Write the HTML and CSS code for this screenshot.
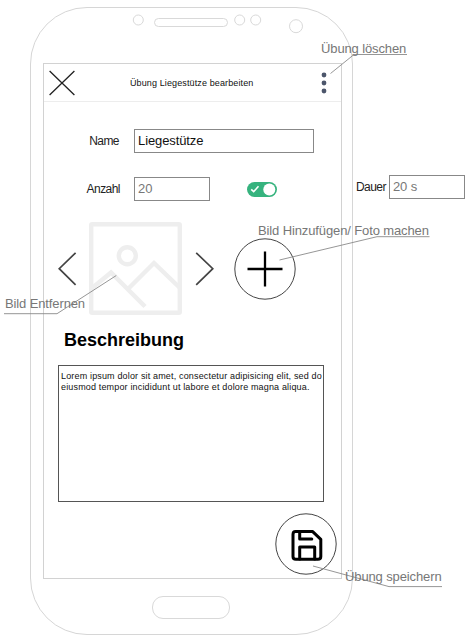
FILE: index.html
```
<!DOCTYPE html>
<html lang="de">
<head>
<meta charset="utf-8">
<title>Übung bearbeiten</title>
<link rel="stylesheet" href="styles.css">
</head>
<body>
<main class="board">
  <section class="phone">
    <div class="sensors">
      <svg width="180" height="30" viewBox="0 0 180 30" fill="none" stroke="#d9d9d9">
        <circle cx="10.3" cy="12" r="5"/>
        <rect x="26.5" y="10.5" width="73" height="8" rx="4"/>
        <circle cx="111.7" cy="12" r="5"/>
        <circle cx="127.7" cy="12" r="5"/>
        <circle cx="168" cy="18.2" r="6.5"/>
      </svg>
    </div>
    <div class="screen">
      <header class="bar">
        <svg class="close" width="26" height="26" viewBox="0 0 26 26" stroke="#222" stroke-width="1.3"><path d="M.6 1L25.4 25M25.4 1L.6 25"/></svg>
        <h1 class="title">Übung Liegestütze bearbeiten</h1>
        <svg class="more" width="6" height="22" viewBox="0 0 6 22" fill="#4c566b"><circle cx="3" cy="3" r="2.4"/><circle cx="3" cy="11" r="2.4"/><circle cx="3" cy="19" r="2.4"/></svg>
      </header>
      <div class="row row-name">
        <span class="label">Name</span>
        <div class="field wide">Liegestütze</div>
      </div>
      <div class="row row-count">
        <span class="label">Anzahl</span>
        <div class="field muted">20</div>
        <svg class="toggle" width="30" height="15" viewBox="0 0 30 15"><rect width="30" height="15" rx="7.5" fill="#36b37e"/><circle cx="22.3" cy="7.5" r="6" fill="#fff"/><path d="M4.2 7.4L6.7 9.7L11.5 4.2" fill="none" stroke="#fff" stroke-width="1.6"/></svg>
      </div>
      <div class="gallery">
        <svg width="19" height="34" viewBox="0 0 19 34" fill="none" stroke="#444" stroke-width="1.7"><path d="M17.6 .8L1.2 16.7L17.6 32.8"/></svg>
        <svg class="picture" width="93" height="93" viewBox="0 0 93 93" fill="none" stroke="#eee" stroke-width="4.4">
          <rect x="2.2" y="2.3" width="88.6" height="88.4" rx="1"/>
          <circle cx="38.3" cy="33.7" r="8.5"/>
          <path d="M2 67L22 50.5L56 84.5M39 67L65 41L91 66"/>
        </svg>
        <svg width="19" height="34" viewBox="0 0 19 34" fill="none" stroke="#444" stroke-width="1.7"><path d="M1.2 .8L17.8 16.7L1.2 32.8"/></svg>
        <svg class="add" width="62" height="62" viewBox="0 0 62 62" fill="none"><circle cx="31" cy="31" r="30.2" stroke="#444"/><path d="M13.5 31H48.5M31 13.5V48.5" stroke="#000" stroke-width="2.3"/></svg>
      </div>
      <h2 class="heading">Beschreibung</h2>
      <div class="description"><div>Lorem ipsum dolor sit amet, consectetur adipisicing elit, sed do</div><div>eiusmod tempor incididunt ut labore et dolore magna aliqua.</div></div>
      <svg class="save" width="62" height="62" viewBox="0 0 62 62" fill="none"><circle cx="31" cy="31" r="30.2" stroke="#444"/><g stroke="#000" stroke-width="3" stroke-linecap="round" stroke-linejoin="round"><path d="M20.6 18.6H37.7L45.8 26.3V43.4Q45.8 46.3 42.9 46.3H20.9Q18 46.3 18 43.4V21.4Q18 18.6 20.6 18.6Z"/><path d="M24.7 19V26H36.8M24.7 46V34H39.7V46"/></g></svg>
    </div>
    <div class="home"></div>
  </section>
  <div class="duration">
    <span class="label">Dauer</span>
    <div class="field muted">20 s</div>
  </div>
  <svg class="leaders" width="472" height="642" viewBox="0 0 472 642" fill="none" stroke="#8a8a8a" stroke-width=".9">
    <path d="M330.5 73.5L354 54.5H407"/>
    <path d="M279.5 260L377 236.7H429.5"/>
    <path d="M116.3 275.5L57 313.7H4"/>
    <path d="M313 566L389 586.6H442"/>
  </svg>
  <span class="note note-delete">Übung löschen</span>
  <span class="note note-add">Bild Hinzufügen/ Foto machen</span>
  <span class="note note-remove">Bild Entfernen</span>
  <span class="note note-save">Übung speichern</span>
</main>
</body>
</html>
```
FILE: styles.css
```
* { box-sizing: border-box; }
body { margin: 0; background: #fff; font-family: "Liberation Sans", Arial, sans-serif; }
svg { display: block; flex: none; }
.board { position: relative; display: flex; align-items: flex-start; width: 472px; height: 642px; padding: 7px 0 0 30px; overflow: hidden; }
.phone { flex: none; width: 323px; height: 628px; border: 1px solid #d6d6d6; border-radius: 57px; padding-left: 12px; }
.sensors { height: 55px; padding-left: 85px; }
.screen { width: 299px; height: 516px; border: 1px solid #d2d2d2; }
.bar { display: flex; align-items: center; height: 38px; border-bottom: 1px solid #ededed; padding: 0 14px 0 5px; }
.close { margin-top: 1px; }
.title { flex: 1; margin: 1px 0 0 55px; font-size: 9px; font-weight: 400; letter-spacing: .12px; color: #111; white-space: nowrap; }
.more { margin-top: 1px; }
.row { display: flex; align-items: center; }
.row-name { margin-top: 27px; }
.row-count { margin-top: 24px; }
.row .label { width: 76px; margin-right: 14px; text-align: right; }
.row-name .label { width: 75px; margin-right: 15px; }
.label { font-size: 12px; line-height: 14px; letter-spacing: -.55px; color: #222; white-space: nowrap; }
.field { flex: none; width: 76px; height: 24px; border: 1px solid #888; padding-left: 3px; font-size: 13px; line-height: 21px; letter-spacing: -.1px; color: #111; white-space: nowrap; background: #fff; }
.wide { width: 180px; }
.muted { color: #777; }
.toggle { margin-left: 37px; }
.gallery { display: flex; align-items: center; margin: 21px 0 0 14px; }
.picture { margin: 0 13px 0 12px; }
.add { margin-left: 20px; }
.heading { margin: 14px 0 0 20px; font-size: 18px; line-height: 22px; color: #000; }
.description { width: 266px; height: 137px; margin: 14px 0 0 14px; border: 1px solid #555; padding: 5px 0 0 2px; font-size: 9px; line-height: 11px; letter-spacing: .16px; color: #111; white-space: nowrap; }
.save { margin: 11px 0 0 231px; }
.home { width: 78px; height: 23px; margin: 17px 0 0 109px; border: 1px solid #d9d9d9; border-radius: 11px; }
.duration { display: flex; align-items: center; gap: 3px; margin: 168px 0 0 3px; }
.leaders { position: absolute; left: 0; top: 0; }
.note { position: absolute; font-size: 13px; line-height: 15px; letter-spacing: -.12px; color: #777; white-space: nowrap; }
.note-delete { left: 321px; top: 41px; }
.note-add { left: 258px; top: 223px; }
.note-remove { left: 5px; top: 296px; }
.note-save { left: 345px; top: 569px; }
```
